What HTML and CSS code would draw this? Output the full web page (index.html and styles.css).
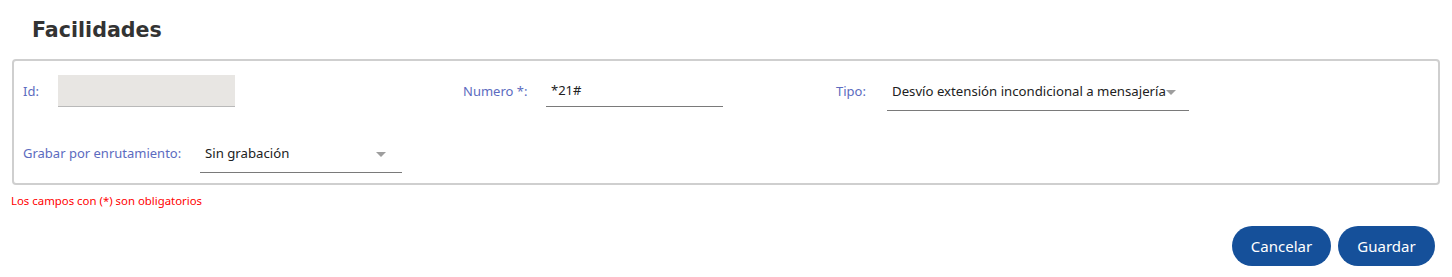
FILE: index.html
```html
<!DOCTYPE html>
<html lang="es">
<head>
<meta charset="utf-8">
<title>Facilidades</title>
<link rel="stylesheet" href="styles.css">
</head>
<body>
<h1 class="title">Facilidades</h1>
<div class="panel">
  <div class="row">
    <div class="field f-id">
      <span class="label l-id">Id:</span>
      <div class="input disabled"></div>
    </div>
    <div class="field f-num">
      <span class="label l-num">Numero *:</span>
      <div class="input num">*21#</div>
    </div>
    <div class="field f-tipo">
      <span class="label l-tipo">Tipo:</span>
      <div class="select tipo"><span class="val">Desvío extensión incondicional a mensajería</span><span class="caret"></span></div>
    </div>
  </div>
  <div class="row row2">
    <div class="field">
      <span class="label l-grab">Grabar por enrutamiento:</span>
      <div class="select grab"><span class="val">Sin grabación</span><span class="caret"></span></div>
    </div>
  </div>
</div>
<p class="req">Los campos con (*) son obligatorios</p>
<div class="actions">
  <button class="btn btn-cancel">Cancelar</button>
  <button class="btn btn-save">Guardar</button>
</div>
</body>
</html>
```
FILE: styles.css
```css
html, body {
  margin: 0;
  padding: 0;
  background: #fff;
  font-family: "Noto Sans", "Open Sans", sans-serif;
  color: #212121;
}
.title {
  margin: 0 0 14px 0;
  padding: 15px 0 0 32px;
  font-family: "DejaVu Sans", sans-serif;
  font-weight: bold;
  font-size: 20.6px;
  line-height: 30px;
  color: #333;
}
.panel {
  margin: 0 12px;
  border: 2px solid #cfcfcf;
  border-radius: 4px;
  padding: 14px 9px 10px 9px;
  height: 98px;
}
.row {
  display: flex;
  align-items: flex-start;
}
.row2 {
  margin-top: 26px;
}
.field {
  display: flex;
  align-items: flex-start;
}
.f-id { width: 440px; }
.f-num { width: 373px; }
.label {
  display: block;
  padding-top: 7px;
  line-height: 18px;
  font-size: 13px;
  color: #5c6bc0;
}
.l-id { width: 35px; }
.l-num { width: 83px; }
.l-tipo { width: 51px; }
.l-grab { width: 177px; }
.input {
  box-sizing: border-box;
  height: 32px;
  width: 177px;
  border-bottom: 1px solid #7a7a7a;
  padding: 6px 5px 0 5px;
  font-size: 13px;
  line-height: 18px;
}
.input.disabled {
  background: #e8e6e3;
  border-bottom-color: #b9b9b9;
}
.select {
  box-sizing: border-box;
  height: 36px;
  border-bottom: 1px solid #7a7a7a;
  padding: 7px 5px 0 5px;
  font-size: 13.2px;
  line-height: 18px;
  display: flex;
  align-items: flex-start;
}
.select.tipo { width: 302px; }
.select.grab { width: 202px; justify-content: space-between; padding-right: 16px; }
.caret {
  width: 0;
  height: 0;
  margin-top: 8px;
  border-left: 5px solid transparent;
  border-right: 5px solid transparent;
  border-top: 5px solid #9e9e9e;
}
.req {
  margin: 8px 0 0 11px;
  font-size: 11.4px;
  line-height: 16px;
  color: #f00;
}
.actions {
  display: flex;
  justify-content: flex-end;
  gap: 7px;
  margin: 17px 17px 0 0;
}
.btn {
  height: 40px;
  border: none;
  border-radius: 20px;
  background: #15509a;
  color: #fff;
  font-family: "Noto Sans", "Open Sans", sans-serif;
  font-size: 15px;
  padding: 0;
}
.btn-cancel { width: 99px; }
.btn-save { width: 97px; }
```
